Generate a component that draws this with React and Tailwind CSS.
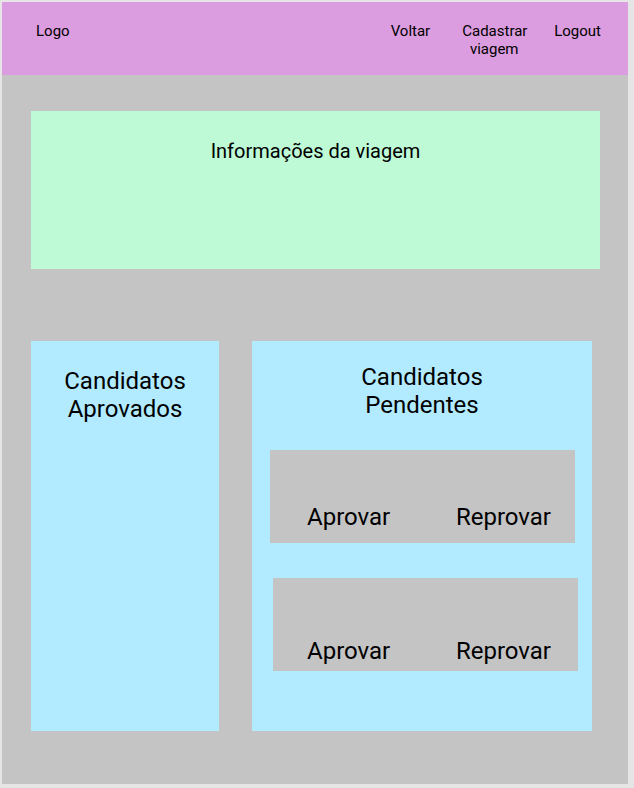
function Candidate({ className }) {
  return (
    <li className={`flex h-[93px] items-end justify-between bg-[#c4c4c4] ${className}`}>
      <button type="button">Aprovar</button>
      <button type="button">Reprovar</button>
    </li>
  );
}

export default function App() {
  return (
    <div className="flex min-h-screen bg-[#e5e5e5] pt-0.5 pr-1.5 pb-1 pl-0.5 font-['Roboto',sans-serif] text-black">
      <div className="flex grow flex-col bg-[#c4c4c4]">
        <header className="flex h-[73px] items-start justify-between bg-[#db9ddf] pt-5 pr-[27px] pl-[34px] text-[15px] leading-[18px]">
          <a href="#inicio">Logo</a>
          <nav className="flex text-center">
            <a href="#voltar" className="mr-8">Voltar</a>
            <a href="#cadastrar" className="mr-7 w-16">Cadastrar viagem</a>
            <a href="#logout">Logout</a>
          </nav>
        </header>

        <main className="flex grow flex-col pt-9 pr-7 pb-[53px] pl-[29px]">
          <section className="h-[158px] bg-[#befad6] pt-7 text-center">
            <h1 className="text-xl leading-6">Informações da viagem</h1>
          </section>

          <div className="mt-[72px] mr-2 flex grow gap-[33px] text-2xl leading-7">
            <section className="flex w-[188px] flex-col items-center bg-[#b2ebff] pt-[26px] text-center">
              <h2 className="w-32">Candidatos Aprovados</h2>
            </section>

            <section className="flex grow flex-col items-center bg-[#b2ebff] pt-[22px]">
              <h2 className="w-32 text-center">Candidatos Pendentes</h2>
              <ul className="mt-[31px] flex w-full flex-col gap-[35px] pr-3.5 pl-[18px]">
                <Candidate className="mr-[3px] pr-6 pb-3 pl-[37px]" />
                <Candidate className="ml-[3px] pr-[27px] pb-1.5 pl-[34px]" />
              </ul>
            </section>
          </div>
        </main>
      </div>
    </div>
  );
}
